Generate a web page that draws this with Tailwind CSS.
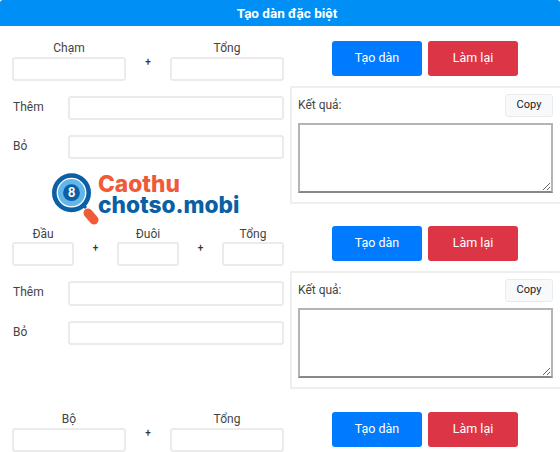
<!DOCTYPE html>
<html lang="en">

<head>
    <meta charset="UTF-8">
    <meta name="viewport" content="width=device-width, initial-scale=1.0">
    <title>Tạo dàn đặc biệt</title>
    <script src="https://cdn.jsdelivr.net/npm/@tailwindcss/browser@4"></script>
</head>

<body class="bg-white overflow-hidden font-['Roboto',sans-serif] text-[12px] text-[#444]">
    <div class="relative h-[452px] overflow-hidden">
        <h1 class="h-[26px] pl-[14px] bg-[#0090f5] text-white text-[13.5px] font-bold text-center leading-[26px] rounded-t-[3px]">Tạo dàn đặc biệt</h1>

        <!-- Cham + Tong -->
        <div class="flex h-[185px]">
            <div class="w-[290px] shrink-0 pl-[12px] pr-[6px]">
                <div class="flex justify-between mt-[14px]">
                    <div class="w-[114px] text-center">
                        <label class="block h-[17px] leading-[17px]">Chạm</label>
                        <input class="block w-full h-[24px] border-2 border-[#ebebeb] rounded-[3px]">
                    </div>
                    <span class="mt-[14px] leading-[15px] text-[10px] font-medium text-[#333]">+</span>
                    <div class="w-[114px] text-center">
                        <label class="block h-[17px] leading-[17px]">Tổng</label>
                        <input class="block w-full h-[24px] border-2 border-[#ebebeb] rounded-[3px]">
                    </div>
                </div>
                <div class="flex mt-[15px]">
                    <label class="w-[56px] pl-[1px] leading-[23px]">Thêm</label>
                    <input class="flex-1 h-[24px] border-2 border-[#ebebeb] rounded-[3px]">
                </div>
                <div class="flex mt-[15px]">
                    <label class="w-[56px] pl-[1px] leading-[23px]">Bỏ</label>
                    <input class="flex-1 h-[24px] border-2 border-[#ebebeb] rounded-[3px]">
                </div>
            </div>
            <div class="flex-1">
                <div class="flex gap-[6px] pl-[42px] pt-[15px]">
                    <button class="w-[90px] h-[35px] bg-[#007bff] text-white text-[12.5px] font-[450] rounded-[3px]">Tạo dàn</button>
                    <button class="w-[90px] h-[35px] bg-[#dc3545] text-white text-[12.5px] font-[450] rounded-[3px]">Làm lại</button>
                </div>
                <div class="mt-[10px] h-[118px] border-2 border-r-0 border-[#eeeeee] pl-[6px] pr-[7px]">
                    <div class="flex justify-between items-center h-[35px]">
                        <span class="pb-[2px]">Kết quả:</span>
                        <button class="w-[48px] h-[23px] bg-[#f8f9fa] border border-[#e9ecef] rounded-[3px] text-[11px] text-[#222]">Copy</button>
                    </div>
                    <textarea class="block w-full h-[70px] border-2 border-[#b4b4b4] border-b-[#888]"></textarea>
                </div>
            </div>
        </div>

        <!-- Dau + Duoi + Tong -->
        <div class="flex h-[186px]">
            <div class="w-[290px] shrink-0 pl-[12px] pr-[6px]">
                <div class="flex justify-between mt-[14px]">
                    <div class="w-[62px] text-center">
                        <label class="block h-[17px] leading-[19px]">Đầu</label>
                        <input class="block w-full h-[24px] border-2 border-[#ebebeb] rounded-[3px]">
                    </div>
                    <span class="mt-[15px] leading-[15px] text-[10px] font-medium text-[#333]">+</span>
                    <div class="w-[62px] text-center">
                        <label class="block h-[17px] leading-[19px]">Đuôi</label>
                        <input class="block w-full h-[24px] border-2 border-[#ebebeb] rounded-[3px]">
                    </div>
                    <span class="mt-[15px] leading-[15px] text-[10px] font-medium text-[#333]">+</span>
                    <div class="w-[62px] text-center">
                        <label class="block h-[17px] leading-[19px]">Tổng</label>
                        <input class="block w-full h-[24px] border-2 border-[#ebebeb] rounded-[3px]">
                    </div>
                </div>
                <div class="flex mt-[15px]">
                    <label class="w-[56px] pl-[1px] leading-[23px]">Thêm</label>
                    <input class="flex-1 h-[25px] border-2 border-[#ebebeb] rounded-[3px]">
                </div>
                <div class="flex mt-[15px]">
                    <label class="w-[56px] pl-[1px] leading-[23px]">Bỏ</label>
                    <input class="flex-1 h-[24px] border-2 border-[#ebebeb] rounded-[3px]">
                </div>
            </div>
            <div class="flex-1">
                <div class="flex gap-[6px] pl-[42px] pt-[15px]">
                    <button class="w-[90px] h-[35px] bg-[#007bff] text-white text-[12.5px] font-[450] rounded-[3px]">Tạo dàn</button>
                    <button class="w-[90px] h-[35px] bg-[#dc3545] text-white text-[12.5px] font-[450] rounded-[3px]">Làm lại</button>
                </div>
                <div class="mt-[10px] h-[118px] border-2 border-r-0 border-[#eeeeee] pl-[6px] pr-[7px]">
                    <div class="flex justify-between items-center h-[35px]">
                        <span class="pb-[1px]">Kết quả:</span>
                        <button class="w-[48px] h-[23px] bg-[#f8f9fa] border border-[#e9ecef] rounded-[3px] text-[11px] text-[#222]">Copy</button>
                    </div>
                    <textarea class="block w-full h-[70px] border-2 border-[#b4b4b4] border-b-[#888]"></textarea>
                </div>
            </div>
        </div>

        <!-- Bo + Tong -->
        <div class="flex">
            <div class="w-[290px] shrink-0 pl-[12px] pr-[6px]">
                <div class="flex justify-between mt-[14px]">
                    <div class="w-[114px] text-center">
                        <label class="block h-[17px] leading-[17px]">Bộ</label>
                        <input class="block w-full h-[24px] border-2 border-[#ebebeb] rounded-[3px]">
                    </div>
                    <span class="mt-[14px] leading-[15px] text-[10px] font-medium text-[#333]">+</span>
                    <div class="w-[114px] text-center">
                        <label class="block h-[17px] leading-[17px]">Tổng</label>
                        <input class="block w-full h-[24px] border-2 border-[#ebebeb] rounded-[3px]">
                    </div>
                </div>
            </div>
            <div class="flex-1">
                <div class="flex gap-[6px] pl-[42px] pt-[15px]">
                    <button class="w-[90px] h-[35px] bg-[#007bff] text-white text-[12.5px] font-[450] rounded-[3px]">Tạo dàn</button>
                    <button class="w-[90px] h-[35px] bg-[#dc3545] text-white text-[12.5px] font-[450] rounded-[3px]">Làm lại</button>
                </div>
            </div>
        </div>

        <!-- Logo over the form -->
        <div class="absolute left-[51px] top-[172px] flex items-start">
            <svg width="50" height="54" viewBox="0 0 50 54">
                <path d="M31 32 L35 36" stroke="#0b5fa5" stroke-width="3"/>
                <path d="M37 41 L43 48" stroke="#f15a38" stroke-width="9" stroke-linecap="round"/>
                <circle cx="20.5" cy="20.7" r="17.2" fill="#fff" stroke="#0b5fa5" stroke-width="4.6"/>
                <circle cx="20.5" cy="20.7" r="13.6" fill="#62b6e8"/>
                <circle cx="20.5" cy="20.7" r="8.4" fill="#0b5fa5"/>
                <text x="20.5" y="25.2" text-anchor="middle" font-family="Lato" font-weight="900" font-size="12.5" fill="#fff">8</text>
            </svg>
            <div class="-ml-[3px] mt-[1px] font-['Inter',sans-serif] font-extrabold text-[22.7px] leading-[21px]">
                <div class="text-[#f15a38]">Caothu</div>
                <div class="text-[#0b5fa5]">chotso.mobi</div>
            </div>
        </div>
    </div>
</body>

</html>
